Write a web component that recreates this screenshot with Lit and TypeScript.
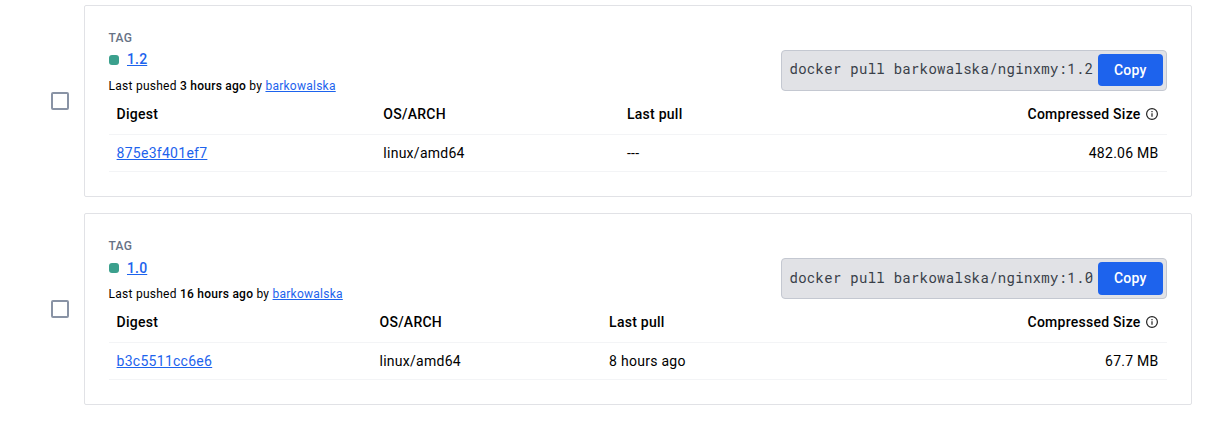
import { LitElement, html, css } from "lit";
import { customElement, property } from "lit/decorators.js";
import { styleMap } from "lit/directives/style-map.js";

interface Tag {
  name: string;
  pushed: string;
  user: string;
  digest: string;
  arch: string;
  lastPull: string;
  size: string;
  columns: number[];
}

const TAGS: Tag[] = [
  {
    name: "1.2",
    pushed: "3 hours ago",
    user: "barkowalska",
    digest: "875e3f401ef7",
    arch: "linux/amd64",
    lastPull: "---",
    size: "482.06 MB",
    columns: [266.7, 243.6],
  },
  {
    name: "1.0",
    pushed: "16 hours ago",
    user: "barkowalska",
    digest: "b3c5511cc6e6",
    arch: "linux/amd64",
    lastPull: "8 hours ago",
    size: "67.7 MB",
    columns: [262.9, 229.6],
  },
];

@customElement("tag-card")
export class TagCard extends LitElement {
  @property({ attribute: false }) tag!: Tag;

  static styles = css`
    :host {
      display: block;
      box-sizing: border-box;
      height: 192px;
      padding: 24px 24px 24px 23.6px;
      border: 1px solid #e1e2e6;
      border-radius: 2px;
      background: #fff;
    }
    .head {
      display: flex;
      justify-content: space-between;
      height: 64px;
    }
    .label {
      height: 16px;
      font-size: 12px;
      line-height: 16px;
      font-weight: 500;
      letter-spacing: 0.2px;
      color: #677285;
    }
    .name {
      display: flex;
      align-items: center;
      gap: 8.4px;
      height: 28px;
      font-weight: 500;
      line-height: 24px;
    }
    .name a {
      padding-bottom: 0.8px;
    }
    .dot {
      width: 10px;
      height: 10px;
      border-radius: 3px;
      background: #3ba08d;
    }
    a {
      color: #1d63ed;
      text-decoration: underline;
    }
    .pushed {
      font-size: 12px;
      line-height: 24px;
      letter-spacing: 0.25px;
      height: 24px;
    }
    b,
    .th {
      font-weight: 500;
    }
    .command {
      display: flex;
      align-items: flex-start;
      box-sizing: border-box;
      width: 386px;
      height: 41px;
      margin-top: 20px;
      padding: 3.15px 3px 0 7.5px;
      justify-content: space-between;
      border: 1px solid #c4c8d1;
      border-radius: 4px;
      background: #e1e2e6;
    }
    code {
      margin-top: 5.45px;
      font-family: "Roboto Mono", "DejaVu Sans Mono", monospace;
      font-size: 14px;
      line-height: 20px;
      letter-spacing: 0.28px;
      white-space: nowrap;
      color: #393f49;
    }
    button {
      width: 65px;
      height: 32.5px;
      padding: 0 0.4px 0 0;
      border: 0;
      border-radius: 4px;
      background: #1d63ed;
      color: #fff;
      font: 500 14px/32px Roboto, sans-serif;
      letter-spacing: 0.25px;
    }
    .row {
      display: grid;
      align-items: center;
      box-sizing: border-box;
      height: 37px;
      padding: 0 8.4px 0 8px;
      border-bottom: 1px solid #f3f4f6;
      letter-spacing: 0.27px;
    }
    .row.th {
      height: 41px;
      letter-spacing: 0.26px;
    }
    .size {
      display: flex;
      align-items: center;
      justify-content: flex-end;
      gap: 5px;
    }
    .info {
      margin-top: 0.6px;
    }
  `;

  render() {
    const t = this.tag;
    const columns = styleMap({
      gridTemplateColumns: `${t.columns.map((w) => `${w}px`).join(" ")} 1fr 1fr`,
    });
    return html`
      <div class="head">
        <div>
          <div class="label">TAG</div>
          <div class="name"><span class="dot"></span><a>${t.name}</a></div>
          <div class="pushed">Last pushed <b>${t.pushed}</b> by <a>${t.user}</a></div>
        </div>
        <div class="command">
          <code>docker pull barkowalska/nginxmy:${t.name}</code>
          <button>Copy</button>
        </div>
      </div>
      <div class="row th" style=${columns}>
        <span>Digest</span>
        <span>OS/ARCH</span>
        <span>Last pull</span>
        <span class="size">
          Compressed Size
          <svg class="info" width="13" height="13" viewBox="0 0 13 13" fill="none" stroke="#222">
            <circle cx="6" cy="6" r="5.4" stroke-width="1.2" />
            <path d="M6 5.2v3.6M6 3.1v1.2" stroke-width="1.2" />
          </svg>
        </span>
      </div>
      <div class="row" style=${columns}>
        <a>${t.digest}</a>
        <span>${t.arch}</span>
        <span>${t.lastPull}</span>
        <span class="size">${t.size}</span>
      </div>
    `;
  }
}

@customElement("app-root")
export class AppRoot extends LitElement {
  static styles = css`
    :host {
      display: flex;
      flex-direction: column;
      gap: 16.25px;
      box-sizing: border-box;
      height: 426px;
      padding: 4.75px 25px 0 51px;
      background: #fff;
      color: #000;
      font: 400 14px/20px Roboto, sans-serif;
      letter-spacing: 0.15px;
    }
    .item {
      display: grid;
      grid-template-columns: 18px 1fr;
      column-gap: 15px;
      align-items: center;
    }
    .checkbox {
      box-sizing: border-box;
      width: 18px;
      height: 18px;
      border: 2px solid #8993a5;
      border-radius: 2px;
    }
  `;

  render() {
    return TAGS.map(
      (tag) => html`
        <div class="item">
          <span class="checkbox" role="checkbox" aria-checked="false"></span>
          <tag-card .tag=${tag}></tag-card>
        </div>
      `
    );
  }
}
